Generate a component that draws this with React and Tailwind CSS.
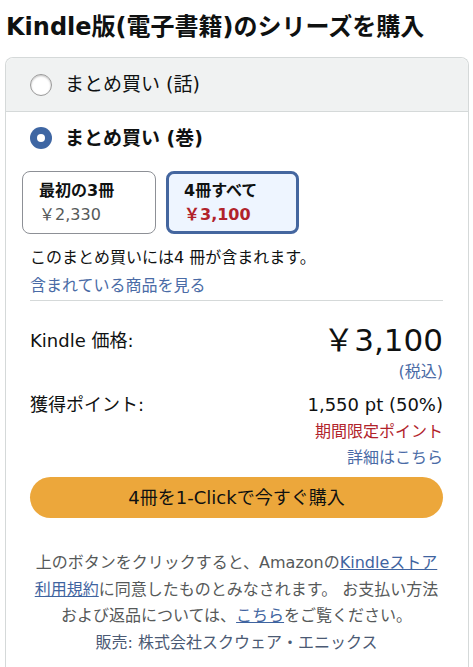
import React from "react";

const font = { fontFamily: '"DejaVu Sans", "Noto Sans CJK JP", sans-serif' };

function Radio({ checked }) {
  if (checked) {
    return (
      <span className="flex h-[22px] w-[22px] shrink-0 items-center justify-center rounded-full bg-[#3e66a3]">
        <span className="h-[8px] w-[8px] rounded-full bg-white" />
      </span>
    );
  }
  return (
    <span className="h-[22px] w-[22px] shrink-0 rounded-full border border-[#9a9a9a] bg-white shadow-[inset_0_1px_2px_rgba(0,0,0,0.25)]" />
  );
}

function Option({ title, price, selected }) {
  return (
    <div
      className={`flex h-[63px] flex-col justify-center rounded-[8px] ${
        selected
          ? "w-[133px] border-[3px] border-[#44669f] bg-[#eef5ff] pl-[15px]"
          : "w-[134px] border border-[#8d9096] bg-white pl-[16px]"
      }`}
    >
      <div className="text-[16px] font-bold leading-[22px] text-[#0f1111]">{title}</div>
      <div
        className={`mt-[2px] text-[16px] leading-[22px] ${
          selected ? "font-bold text-[#b1232b]" : "text-[#565959]"
        }`}
      >
        {price}
      </div>
    </div>
  );
}

export default function App() {
  return (
    <div className="min-h-[667px] w-[473px] bg-white text-[#0f1111]" style={font}>
      <h2 className="mb-[14px] px-[6px] pt-[11px] text-[24px] font-bold leading-[32px]">
        Kindle版(電子書籍)のシリーズを購入
      </h2>

      <div className="ml-[5px] mr-[4px] min-h-[610px] rounded-t-[8px] border border-b-0 border-[#d5d9d9]">
        {/* single-episode bundle */}
        <div className="flex h-[54px] items-center gap-[13px] rounded-t-[8px] border-b border-[#d5d9d9] bg-[#f0f2f2] pl-[24px]">
          <Radio />
          <span className="text-[19px]">まとめ買い (話)</span>
        </div>

        {/* volume bundle */}
        <div className="pl-[16px] pr-[25px]">
          <div className="mt-[15px] flex h-[22px] items-center gap-[13px] pl-[8px]">
            <Radio checked />
            <span className="text-[19px] font-bold">まとめ買い (巻)</span>
          </div>

          <div className="mt-[22px] flex gap-[10px]">
            <Option title="最初の3冊" price="￥2,330" />
            <Option title="4冊すべて" price="￥3,100" selected />
          </div>

          <div className="pl-[8px]">
            <p className="mt-[10px] text-[16px] leading-[28px]">このまとめ買いには4 冊が含まれます。</p>
            <p className="text-[16px] leading-[28px] text-[#4a6ba6]">含まれている商品を見る</p>
            <div className="border-t border-[#d5d9d9]" />

            <div className="mt-[19px] flex h-[40px] items-center justify-between">
              <span className="text-[18px]">Kindle 価格:</span>
              <span className="text-[31px] leading-[40px]">￥3,100</span>
            </div>
            <div className="text-right text-[16px] leading-[24px] text-[#4a6ba6]">(税込)</div>

            <div className="mt-[8px] flex h-[24px] items-center justify-between text-[18px]">
              <span>獲得ポイント:</span>
              <span>1,550 pt (50%)</span>
            </div>
            <div className="mt-[4px] text-right text-[16px] leading-[24px] text-[#b1232b]">期間限定ポイント</div>
            <div className="mt-[1px] text-right text-[16px] leading-[26px] text-[#4a6ba6]">詳細はこちら</div>

            <button className="mt-[6px] flex h-[41px] w-full items-center justify-center rounded-full bg-[#eca73b] text-[18px] text-[#0f1111]">
              4冊を1-Clickで今すぐ購入
            </button>

            <p className="mt-[32px] text-center text-[16px] leading-[26.7px] text-[#565959]">
              上のボタンをクリックすると、Amazonの
              <span className="text-[#3f64a0] underline">
                Kindleストア
                <br />
                利用規約
              </span>
              に同意したものとみなされます。 お支払い方法
              <br />
              および返品については、<span className="text-[#3f64a0] underline">こちら</span>をご覧ください。
              <br />
              <span className="text-[#4b5a74]">販売: 株式会社スクウェア・エニックス</span>
            </p>
          </div>
        </div>
      </div>
    </div>
  );
}
